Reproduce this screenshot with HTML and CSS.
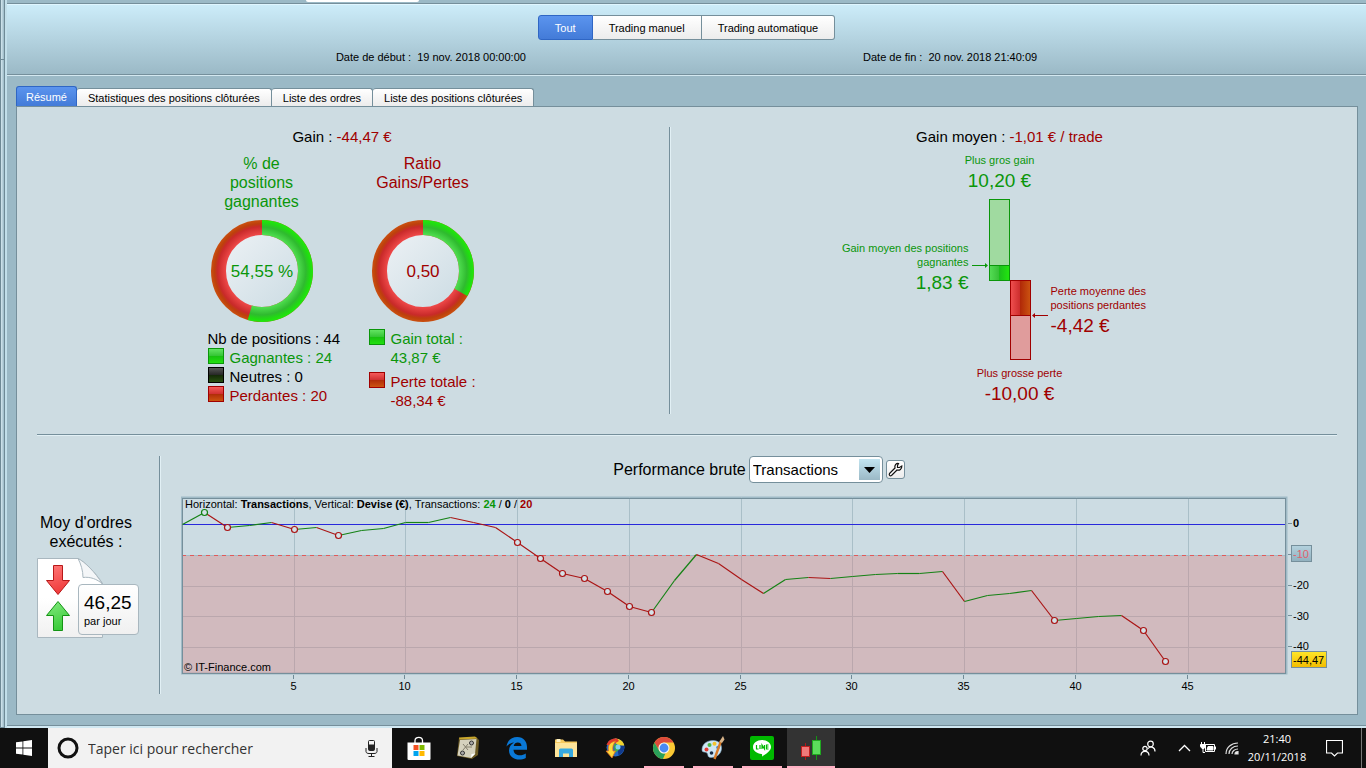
FILE: index.html
```html
<!DOCTYPE html>
<html lang="fr">
<head>
    <meta charset="UTF-8">
    <meta name="viewport" content="width=device-width, initial-scale=1.0">
    <title>Rapport détaillé</title>
    <link rel="stylesheet" href="styles.css">
</head>
<body>

    <div class="window">
        <div class="rail"><span></span><span></span></div>

        <div class="report">
            <div class="top-strip"><span class="strip-tab"></span></div>

            <header class="report-header">
                <div class="filter">
                    <button class="selected">Tout</button>
                    <button>Trading manuel</button>
                    <button>Trading automatique</button>
                </div>
                <div class="dates">
                    <span>Date de début :&nbsp; 19 nov. 2018 00:00:00</span>
                    <span>Date de fin :&nbsp; 20 nov. 2018 21:40:09</span>
                </div>
            </header>

            <div class="tabs" role="tablist">
                <button role="tab" class="selected" aria-selected="true">Résumé</button>
                <button role="tab">Statistiques des positions clôturées</button>
                <button role="tab">Liste des ordres</button>
                <button role="tab">Liste des positions clôturées</button>
            </div>

            <main class="panel">
                <div class="summary">
                    <section class="gain">
                        <div class="headline">Gain : <span class="loss">-44,47 €</span></div>
                        <div class="rings">
                            <div class="ring-col">
                                <div class="ring-title win">% de<br>positions<br>gagnantes</div>
                                <svg class="ring" width="108" height="102" viewBox="-54 -51 108 102">
                                    <defs>
                                        <radialGradient id="ringGreen" gradientUnits="userSpaceOnUse" cx="0" cy="0" r="51">
                                            <stop offset="0.7" stop-color="#52e052"/>
                                            <stop offset="0.86" stop-color="#2fba2f"/>
                                            <stop offset="0.95" stop-color="#20dd10"/>
                                            <stop offset="1" stop-color="#22e80e"/>
                                        </radialGradient>
                                        <radialGradient id="ringRed" gradientUnits="userSpaceOnUse" cx="0" cy="0" r="51">
                                            <stop offset="0.7" stop-color="#f04a4a"/>
                                            <stop offset="0.87" stop-color="#c92a2a"/>
                                            <stop offset="0.93" stop-color="#bd400c"/>
                                            <stop offset="1" stop-color="#ca5010"/>
                                        </radialGradient>
                                        <linearGradient id="ringCore" x1="0" y1="0" x2="1" y2="1">
                                            <stop offset="0.1" stop-color="#e9eff3"/>
                                            <stop offset="0.9" stop-color="#cfdee5"/>
                                        </linearGradient>
                                    </defs>
                                    <circle r="37" fill="url(#ringCore)"/>
                                    <circle r="43.5" fill="none" stroke="url(#ringRed)" stroke-width="15"/>
                                    <circle r="43.5" fill="none" stroke="url(#ringGreen)" stroke-width="15" pathLength="100" stroke-dasharray="54.55 100" transform="rotate(-90)"/>
                                    <text class="ring-value win" x="0" y="6">54,55 %</text>
                                </svg>
                                <div class="legend">
                                    <div>Nb de positions : 44</div>
                                    <div class="key win"><i class="swatch green"></i>Gagnantes : 24</div>
                                    <div class="key"><i class="swatch black"></i>Neutres : 0</div>
                                    <div class="key loss"><i class="swatch red"></i>Perdantes : 20</div>
                                </div>
                            </div>
                            <div class="ring-col">
                                <div class="ring-title loss">Ratio<br>Gains/Pertes</div>
                                <svg class="ring" width="108" height="102" viewBox="-54 -51 108 102">
                                    <circle r="37" fill="url(#ringCore)"/>
                                    <circle r="43.5" fill="none" stroke="url(#ringRed)" stroke-width="15"/>
                                    <circle r="43.5" fill="none" stroke="url(#ringGreen)" stroke-width="15" pathLength="100" stroke-dasharray="33.2 100" transform="rotate(-90)"/>
                                    <text class="ring-value loss" x="0" y="6">0,50</text>
                                </svg>
                                <div class="legend spaced">
                                    <div class="key win"><i class="swatch green"></i><span>Gain total :<br>43,87 €</span></div>
                                    <div class="key loss"><i class="swatch red"></i><span>Perte totale :<br>-88,34 €</span></div>
                                </div>
                            </div>
                        </div>
                    </section>

                    <section class="average">
                        <div class="headline">Gain moyen : <span class="loss">-1,01 € / trade</span></div>
                        <div class="extreme best win">Plus gros gain<b>10,20 €</b></div>
                        <div class="bars">
                            <div class="bar-label left win">Gain moyen des positions<br>gagnantes<b>1,83 €</b></div>
                            <svg width="76" height="162" viewBox="0 0 76 162">
                                <defs>
                                    <linearGradient id="barGreen">
                                        <stop offset="0" stop-color="#55dd55"/>
                                        <stop offset="0.5" stop-color="#35be35"/>
                                        <stop offset="0.5" stop-color="#1cc01c"/>
                                        <stop offset="1" stop-color="#22e80e"/>
                                    </linearGradient>
                                    <linearGradient id="barRed">
                                        <stop offset="0" stop-color="#f05050"/>
                                        <stop offset="0.48" stop-color="#cc2c2c"/>
                                        <stop offset="0.48" stop-color="#b02808"/>
                                        <stop offset="1" stop-color="#cc5410"/>
                                    </linearGradient>
                                </defs>
                                <rect x="17.500" y="0.500" width="20" height="66" fill="#a0daa0" stroke="#0a960a"/>
                                <rect x="17.500" y="66.500" width="20" height="15" fill="url(#barGreen)" stroke="#0a960a"/>
                                <rect x="38.500" y="81.500" width="20" height="35" fill="url(#barRed)" stroke="#a00000"/>
                                <rect x="38.500" y="116.500" width="20" height="44" fill="#e09c9c" stroke="#a00000"/>
                                <path d="M0 66.500H14" stroke="#0a960a"/>
                                <path d="M13 64v5l3-2.500z" fill="#0a960a"/>
                                <path d="M62 116.500H76" stroke="#a00000"/>
                                <path d="M63 114v5l-3-2.500z" fill="#a00000"/>
                            </svg>
                            <div class="bar-label right loss">Perte moyenne des<br>positions perdantes<b>-4,42 €</b></div>
                        </div>
                        <div class="extreme worst loss">Plus grosse perte<b>-10,00 €</b></div>
                    </section>
                </div>

                <div class="performance">
                    <section class="orders">
                        <div class="orders-title">Moy d'ordres<br>exécutés :</div>
                        <div class="orders-card">
                            <svg width="67" height="80" viewBox="0 0 67 80">
                                <defs>
                                    <linearGradient id="sheet" x2="0" y2="1">
                                        <stop offset="0.5" stop-color="#fff"/>
                                        <stop offset="1" stop-color="#f0f0f0"/>
                                    </linearGradient>
                                    <linearGradient id="down" x2="0.3" y2="1">
                                        <stop offset="0" stop-color="#ff7a7a"/>
                                        <stop offset="1" stop-color="#f03c3c"/>
                                    </linearGradient>
                                    <linearGradient id="up" x2="0.3" y2="1">
                                        <stop offset="0" stop-color="#84ea80"/>
                                        <stop offset="1" stop-color="#3ccc3c"/>
                                    </linearGradient>
                                </defs>
                                <path d="M.5.5H41C48 4 58 14 65.500 25.500V79.500H.5z" fill="url(#sheet)" stroke="#a9b7bf"/>
                                <path d="M41 .5C44 6 46 13 46 19.500C53 18.500 60 21 65.500 26C58 14 48 4 41 .5z" fill="#f4f6f8" stroke="#a9b7bf"/>
                                <path d="M16.500 7.500h9v15h7L21 36.500 9.500 22.500h7z" fill="url(#down)" stroke="#b81818"/>
                                <path d="M16.500 72.500h9v-15h7L21 43.500 9.500 57.500h7z" fill="url(#up)" stroke="#149414"/>
                            </svg>
                            <div class="orders-badge"><b>46,25</b>par jour</div>
                        </div>
                    </section>

                    <section class="graph">
                        <div class="graph-bar">
                            <label for="curve">Performance brute</label>
                            <span class="picker">
                                <select id="curve">
                                    <option>Transactions</option>
                                    <option>Temps</option>
                                </select>
                                <span class="picker-arrow"><svg width="11" height="6" viewBox="0 0 11 6"><path d="M0 0h11L5.500 6z"/></svg></span>
                            </span>
                            <button class="tool" aria-label="Réglages">
                                <svg width="15" height="15" viewBox="0 0 15 15"><path d="M1.500 11.500L7 6C6.300 3.500 8 1.200 10.500 1.500L9.500 3.500V5.500H11.500L13.800 4C14 7 11.500 8.800 9 8L3.500 13.500C2 14.300.700 13 1.500 11.500z" fill="#fff" stroke="#111" stroke-width="1.200"/></svg>
                            </button>
                        </div>
                        <svg class="chart" id="chart"></svg>
                    </section>
                </div>
            </main>
        </div>
    </div>

    <footer class="taskbar">
        <button class="start" aria-label="Démarrer">
            <svg width="16" height="16" viewBox="0 0 16 16" fill="#fff"><path d="M0 2.300L6.500 1.400V7.600H0zM7.300 1.300L16 0V7.600H7.300zM0 8.400H6.500V14.600L0 13.700zM7.300 8.400H16V16L7.300 14.700z"/></svg>
        </button>
        <label class="search">
            <svg width="22" height="22" viewBox="0 0 22 22"><circle cx="11" cy="11" r="9" fill="none" stroke="#111" stroke-width="3"/></svg>
            <input type="text" placeholder="Taper ici pour rechercher" aria-label="Taper ici pour rechercher">
            <svg width="13" height="17" viewBox="0 0 13 17" fill="none" stroke="#222"><rect x="3.500" y=".5" width="6" height="10" rx="1"/><path d="M4 5h5v5H4z" fill="#222"/><path d="M1 8v3.500C1 13 2.500 13.500 4 13.500h5c1.500 0 3-.5 3-2V8M6.500 13.500v3M3.500 16.500h6"/></svg>
        </label>

        <nav class="apps">
            <button aria-label="Microsoft Store">
                <svg width="24" height="24" viewBox="0 0 24 24"><path d="M8 7V4.500C8 .3 15.500.3 15.500 4.500V7" fill="none" stroke="#fff" stroke-width="1.300"/><path d="M.5 6.500h23V23a1 1 0 0 1-1 1h-21a1 1 0 0 1-1-1z" fill="#fff"/><path d="M6.500 9h5v5h-5z" fill="#f25022"/><path d="M12.500 9h5v5h-5z" fill="#7fba00"/><path d="M6.500 15h5v5h-5z" fill="#00a4ef"/><path d="M12.500 15h5v5h-5z" fill="#ffb900"/></svg>
            </button>
            <button aria-label="Carte">
                <svg width="24" height="24" viewBox="0 0 24 24"><path d="M3 2L20 1l3 3-1 15-6 4L1 20z" fill="#6b5a25"/><path d="M3 1.500l16-1 2.500 2-18 1z" fill="#c9a72c"/><path d="M4 4l16.500-1-1.500 15-4 4L1.500 19.500z" fill="#d5d1bd"/><path d="M7 8l5 6M12 8l-5 6M9 11h7" fill="none" stroke="#85806e"/><circle cx="15.500" cy="7" r="2" fill="#aaa" stroke="#333"/><circle cx="6.500" cy="17" r="2" fill="#aaa" stroke="#333"/><path d="M15 22l.5-4 4-.5z" fill="#fff"/></svg>
            </button>
            <button aria-label="Edge">
                <svg width="24" height="24" viewBox="0 0 24 24"><path d="M1.500 10.500C2.500 4 7 1 12.300 1C18.500 1 22 5.500 22 11v2.700H8.500C8.800 20 16.500 20.500 20.800 17.500V22C14 25.500 4 23 4 14.500C4 11 6 8 9 6.500C5.500 7 3 8.500 1.500 10.500zM8.700 10h7.800C16.500 5.500 9.500 5.300 8.700 10z" fill="#0a78d6"/></svg>
            </button>
            <button aria-label="Explorateur de fichiers">
                <svg width="24" height="24" viewBox="0 0 24 24"><path d="M1 3.500h8l2 2H23V21H1z" fill="#f5c95e"/><path d="M2.500 3h4v3h-4z" fill="#fff3c4"/><path d="M1 7h22v14H1z" fill="#fde49a"/><path d="M5 21v-7a1.500 1.500 0 0 1 1.500-1.500h11A1.500 1.500 0 0 1 19 14v7h-4v-3.500H9V21z" fill="#35a9e1"/></svg>
            </button>
            <button aria-label="Navigateur">
                <svg width="24" height="24" viewBox="0 0 24 24"><circle cx="12.500" cy="11.500" r="9" fill="#2468c4"/><path d="M12 2.500c5 0 8.500 3 9.300 7L16 10 11 6z" fill="#f2d32c"/><path d="M3.500 9C5 4 9 2 14 2.500L16 5 9 9z" fill="#e33a2c"/><path d="M14 9l7.500 1c0 5-3 8-6 9.500z" fill="#123a8c"/><path d="M11 8l5 1 1 4-5 4z" fill="#3fae4a"/><path d="M13 5C7 6 4.500 9 5.500 15H3l6 7 3.500-7H10C9.500 11 10 8 13 5z" fill="#ffd93b" stroke="#e06a20" stroke-width=".8"/><circle cx="15" cy="11" r="2.500" fill="#7fd0f2"/></svg>
            </button>
            <button class="running" aria-label="Chrome">
                <svg width="24" height="24" viewBox="0 0 24 24"><circle cx="12" cy="12" r="11" fill="#fbc934"/><path d="M12 1a11 11 0 0 1 9.500 5.500H12A5.500 5.500 0 0 0 7.200 14.800L2.500 6.500A11 11 0 0 1 12 1z" fill="#de4b3c"/><path d="M2.500 6.500L7.200 14.800A5.500 5.500 0 0 0 13.500 17.300L10.900 23A11 11 0 0 1 2.500 6.500z" fill="#2aa15b"/><circle cx="12" cy="12" r="5.500" fill="#f3f3f3"/><circle cx="12" cy="12" r="4.400" fill="#4a8af4"/></svg>
            </button>
            <button class="running" aria-label="Paint">
                <svg width="24" height="24" viewBox="0 0 24 24"><path d="M1 14C1 8 6 4.500 12 4.500c6 0 9 4 8.500 8.500-.5 5-5 8.500-10.500 8.500-4 0-2.500-3-4-4.500S1 17 1 14z" fill="#cfe6f4" stroke="#7fa8c4" stroke-width=".6"/><circle cx="5.500" cy="13.500" r="2" fill="#e33b32"/><circle cx="8.500" cy="9" r="2" fill="#4cb648"/><circle cx="13.500" cy="7.800" r="2" fill="#f5c32c"/><circle cx="17" cy="11.500" r="1.800" fill="#3a86d8"/><circle cx="10.500" cy="17" r="1.800" fill="#182c45"/><path d="M20 5L13.500 23" stroke="#d97b27" stroke-width="2.400"/><path d="M18.500 5.500L22 0l1.500 3.500L21 7z" fill="#d8b48a"/></svg>
            </button>
            <button class="running" aria-label="LINE">
                <svg width="24" height="24" viewBox="0 0 24 24"><rect width="24" height="24" rx="2" fill="#00b900"/><path d="M12 4c5 0 9 3 9 7 0 4-5 7-9 9.500.3-1.500.3-2.500-.5-2.500C7 17.500 3 15 3 11s4-7 9-7z" fill="#fff"/><path d="M6.500 9v4h2M10 9v4M12 13V9l2.500 4V9M18.500 9h-2v4h2M16.500 11h2" fill="none" stroke="#00b900" stroke-width="1.200"/></svg>
            </button>
            <button class="running active" aria-label="Trading">
                <svg width="24" height="24" viewBox="0 0 24 24"><path d="M6.500 7v17" stroke="#b01818"/><rect x="2.500" y="10.500" width="8" height="10" fill="#f07a7a" stroke="#c02020"/><path d="M17.500 0v24" stroke="#149414"/><rect x="13.500" y="4.500" width="8" height="14" fill="#5cdc5c" stroke="#20a820"/></svg>
            </button>
        </nav>

        <div class="tray">
            <button class="people" aria-label="Contacts">
                <svg width="16" height="16" viewBox="0 0 16 16" fill="none" stroke="#fff" stroke-width="1.200"><circle cx="10.500" cy="4" r="2.800"/><circle cx="5" cy="8.500" r="2.200"/><path d="M1 15.500c0-5.500 8-5.500 8 0M8 8.500c3-3 7-1 7 3"/></svg>
            </button>
            <button aria-label="Icônes cachées">
                <svg width="13" height="8" viewBox="0 0 13 8"><path d="M1 7l5.500-5.500L12 7" fill="none" stroke="#fff" stroke-width="1.300"/></svg>
            </button>
            <button aria-label="Batterie">
                <svg width="17" height="12" viewBox="0 0 17 12" fill="none" stroke="#fff"><path d="M5.500 2.500h9v7h-9z"/><path d="M8 4.500h5v3.500H7z" fill="#fff"/><path d="M15.500 4.500v3M1.500 0v2.500M4.500 0v2.500M3 6v4.500h2"/><path d="M.5 2.500h5v2l-1.500 2H2L.5 4.500z" fill="#fff"/></svg>
            </button>
            <button aria-label="Wi-Fi">
                <svg width="14" height="14" viewBox="0 0 14 14" fill="none" stroke="#ddd" stroke-width="1.200"><path d="M1 13C1 6.500 6.500 2 13 2M4 13C4 8.500 8 5 13 5M7 13C7 10.500 9.500 8 13 8"/><path d="M10 13c0-1.500 1.500-2.500 3-2.500V13z" fill="#fff"/></svg>
            </button>
            <div class="clock">21:40<br>20/11/2018</div>
            <button class="notif" aria-label="Notifications">
                <svg width="17" height="17" viewBox="0 0 17 17"><path d="M.5.500h16v12.500h-5L8.500 16 5.500 13h-5z" fill="none" stroke="#fff" stroke-width="1.200"/></svg>
            </button>
            <span class="desktop-peek"></span>
        </div>
    </footer>

    <script src="chart.js"></script>
</body>
</html>
```
FILE: chart.js
```js
document.addEventListener('DOMContentLoaded', () => {

    // Cumulated gain after each transaction, in euros
    const gains = [
        0, 3.9, -1, -0.2, 0.6, -1.6, -1, -3.6, -2.1, -1.3,
        0.6, 0.6, 2.3, 0.6, -1, -5.8, -11, -15.9, -17.5, -21.8,
        -26.6, -28.6, -18.2, -9.7, -12.8, -18, -22.4, -17.9, -17.2, -17.5,
        -16.9, -16.2, -15.9, -15.9, -15.3, -25, -23.1, -22.4, -21.4, -31.2,
        -30.5, -29.9, -29.5, -34.4, -44.47
    ];
    // New highs and new lows get a dot
    const dots = [1, 2, 5, 7, 15, 16, 17, 18, 19, 20, 21, 39, 43, 44];

    const chart = document.getElementById('chart');
    const top = 1;
    const bottom = 177;
    const zero = 28;
    const span = 49.4;

    function draw() {
        const width = chart.clientWidth;
        const right = width - 50;
        const px = n => Math.round(1 + n * (right - 2) / span) + 0.5;
        const py = v => Math.round(zero - v * 3.08) + 0.5;
        const limit = py(-10);

        let out = `
            <defs>
                <linearGradient id="tagBlue" x2="0" y2="1"><stop offset="0" stop-color="#b4d2de"/><stop offset="1" stop-color="#90b0be"/></linearGradient>
                <linearGradient id="tagGold" x2="0" y2="1"><stop offset="0" stop-color="#ffe628"/><stop offset="1" stop-color="#f2bc00"/></linearGradient>
            </defs>
            <rect x="0.5" y="${top + 0.5}" width="${right - 1}" height="${bottom - top}" fill="#ccdce3" stroke="#9fbac6" stroke-width="2"/>`;

        for (let n = 5; n <= 45; n += 5) {
            out += `<path d="M${px(n)} ${top}V${bottom}" stroke="#a9bfc8"/>
                <path d="M${px(n) - 1} ${bottom + 2}v4" stroke="#6f8a96"/>
                <text x="${px(n) - 1}" y="194" text-anchor="middle">${n}</text>`;
        }
        for (const v of [-20, -30, -40]) {
            out += `<path d="M1 ${py(v)}H${right - 1}" stroke="#a9bfc8"/>`;
        }

        // Loss zone
        out += `<rect x="1" y="${limit}" width="${right - 2}" height="${bottom - limit}" fill="#d88080" fill-opacity="0.37"/>
            <path d="M1 ${limit}H${right - 1}" stroke="#a4bcc6"/>
            <path d="M1 ${limit}H${right - 1}" stroke="#e05a5a" stroke-dasharray="4 4"/>
            <path d="M1 ${py(0)}H${right - 1}" stroke="#2828dc"/>
            <rect x="1.5" y="${top + 1.5}" width="${right - 3}" height="${bottom - top - 1}" fill="none" stroke="#758f9b"/>`;

        for (let n = 1; n < gains.length; n++) {
            const kind = gains[n] >= gains[n - 1] ? 'up' : 'down';
            out += `<path class="${kind}" d="M${px(n - 1)} ${py(gains[n - 1])}L${px(n)} ${py(gains[n])}"/>`;
        }
        for (const n of dots) {
            const kind = gains[n] >= gains[n - 1] ? 'up' : 'down';
            out += `<circle class="${kind}" cx="${px(n)}" cy="${py(gains[n])}" r="3"/>`;
        }

        // Scale on the right
        for (const v of [0, -10, -20, -30, -40]) {
            out += `<path d="M${right + 1} ${py(v) - 1}h4" stroke="#758f9b"/>`;
        }
        out += `<text class="zero" x="${right + 6}" y="31">0</text>
            <rect x="${right + 4.5}" y="49.5" width="20" height="16" fill="url(#tagBlue)" stroke="#758f9b"/>
            <text x="${right + 6}" y="62" class="limit">-10</text>
            <text x="${right + 6}" y="93">-20</text>
            <text x="${right + 6}" y="124">-30</text>
            <text x="${right + 6}" y="154">-40</text>
            <rect x="${right + 4.5}" y="155.5" width="35" height="16" fill="url(#tagGold)" stroke="#758f9b"/>
            <text x="${right + 6}" y="168">-44,47</text>
            <text x="4" y="12">Horizontal: <tspan class="strong">Transactions</tspan>, Vertical: <tspan class="strong">Devise (€)</tspan>, Transactions: <tspan class="strong win">24</tspan> / <tspan class="strong">0</tspan> / <tspan class="strong loss">20</tspan></text>
            <text x="3" y="175">© IT-Finance.com</text>`;

        chart.innerHTML = out;
    }

    draw();
    window.addEventListener('resize', draw);
});
```
FILE: styles.css
```css
* {
    box-sizing: border-box;
}
body {
    margin: 0;
    min-height: 100vh;
    display: flex;
    flex-direction: column;
    font-family: "Liberation Sans", Arial, sans-serif;
    font-size: 11px;
    color: #000;
    background-color: #9bb9c6;
}
button {
    font: inherit;
    color: inherit;
    padding: 0;
    border: none;
    background: none;
}
b {
    font-weight: normal;
}
svg {
    display: block;
}
.win {
    color: #0a960a;
    fill: #0a960a;
}
.loss {
    color: #a00000;
    fill: #a00000;
}

/* Window frame */
.window {
    flex: 1;
    display: flex;
}
.rail {
    width: 7px;
    display: flex;
    flex-direction: column;
    border-right: 2px solid #c2dfea;
    border-left: 1px solid #6f8a96;
}
.rail span {
    height: 366px;
    border-right: 1px solid #6f8a96;
    border-bottom: 1px solid #6f8a96;
    background: linear-gradient(to right, #d4e8f0, #9bb9c6);
}
.rail span:first-child {
    height: 60px;
}
.rail span:last-child {
    flex: 1;
}
.report {
    flex: 1;
    min-width: 0;
    display: flex;
    flex-direction: column;
    border-bottom: 2px solid #d0e8f2;
    box-shadow: inset 0 -1px #758f9b;
}
.top-strip {
    height: 4px;
    padding-left: 299px;
    border-bottom: 1px solid #758f9b;
}
.strip-tab {
    display: block;
    width: 113px;
    height: 2px;
    background-color: #fff;
    border-radius: 0 0 3px 3px;
}
.report-header {
    padding-top: 10px;
    height: 71px;
    border-top: 1px solid #e0f6ff;
    border-bottom: 1px solid #758f9b;
    box-shadow: 0 1px #d4e8f0;
    background: linear-gradient(#ccecf9, #9bb9c6);
}
.filter {
    display: flex;
    justify-content: center;
}
.filter button {
    height: 25px;
    padding: 0 16px;
    border: 1px solid #758f9b;
    border-left: none;
    background: linear-gradient(#fff, #ececec);
}
.filter button:first-child {
    border-radius: 3px 0 0 3px;
}
.filter button:last-child {
    border-radius: 0 3px 3px 0;
}
.filter .selected,
.tabs .selected {
    color: #fff;
    border: 1px solid #2f66c4;
    background: linear-gradient(#5b94ee, #437bd8);
}
.dates {
    width: 77%;
    margin: 10px auto 0;
    padding-left: 8px;
    display: grid;
    grid-template-columns: 1fr 1fr;
    text-align: center;
    line-height: 14px;
}

/* Tabs */
.tabs {
    margin: 11px 9px 0;
    display: flex;
    align-items: flex-end;
}
.tabs button {
    height: 18px;
    padding: 0 11px;
    border: 1px solid #758f9b;
    border-left: none;
    border-bottom: none;
    border-radius: 3px 3px 0 0;
    background: linear-gradient(#fff, #ececec);
}
.tabs .selected {
    height: 20px;
    padding: 0 9px;
    border: 1px solid #2f66c4;
    border-bottom: none;
    background: linear-gradient(#5b94ee, #437bd8);
}
.panel {
    flex: 1;
    margin: 0 8px 11px 9px;
    padding: 20px;
    border: 1px solid #758f9b;
    background-color: #cddce2;
}

/* Gain summary */
.summary {
    display: grid;
    grid-template-columns: 633fr 667fr;
    padding-bottom: 20px;
    border-bottom: 1px solid #758f9b;
    box-shadow: 0 1px #e2f0f5;
    font-size: 15px;
    line-height: 19px;
    text-align: center;
}
.headline {
    white-space: nowrap;
}
.gain {
    min-height: 287px;
    padding-right: 22px;
    border-right: 1px solid #758f9b;
    box-shadow: 1px 0 #e2f0f5;
}
.rings {
    margin-top: 8px;
    display: flex;
    justify-content: center;
    gap: 53px;
}
.ring-col {
    width: 108px;
}
.ring-title {
    height: 57px;
    margin-bottom: 9px;
    font-size: 16px;
}
.ring-value {
    font-size: 17px;
    text-anchor: middle;
}
.legend {
    margin-top: 7px;
    text-align: left;
    white-space: nowrap;
}
.legend.spaced {
    display: grid;
    gap: 5px;
}
.key {
    display: flex;
    gap: 6px;
}
.swatch {
    flex: none;
    width: 16px;
    height: 16px;
    border: 1px solid;
}
.swatch.green {
    border-color: #0a960a;
    background: linear-gradient(#62e462, #34c434 50%, #18c010 50%, #22e010);
}
.swatch.black {
    border-color: #000;
    background: linear-gradient(#555, #262626 50%, #142808 50%, #285010);
}
.swatch.red {
    border-color: #a00000;
    background: linear-gradient(#f45a5a, #d03030 50%, #b02c08 50%, #cc5410);
}

/* Average gain */
.average {
    padding-left: 12px;
}
.extreme,
.bar-label {
    font-size: 11px;
    line-height: 14px;
}
.extreme b,
.bar-label b {
    display: block;
    margin-top: 3px;
    font-size: 19px;
    line-height: 22px;
}
.best {
    margin: 7px 20px 7px 0;
}
.worst {
    margin: 5px 0 0 20px;
}
.bars {
    display: grid;
    grid-template-columns: 1fr 76px 1fr;
    column-gap: 3px;
}
.bar-label.left {
    padding-top: 42px;
    text-align: right;
}
.bar-label.right {
    padding-top: 85px;
    text-align: left;
}

/* Orders and performance curve */
.performance {
    display: flex;
    padding-top: 21px;
}
.orders {
    display: flex;
    flex-direction: column;
    justify-content: center;
    width: 123px;
    border-right: 1px solid #758f9b;
    box-shadow: 1px 0 #e2f0f5;
}
.orders-title {
    margin: 0 24px 7px 0;
    font-size: 16px;
    line-height: 19px;
    text-align: center;
}
.orders-card {
    position: relative;
}
.orders-badge {
    position: absolute;
    left: 41px;
    top: 26px;
    width: 61px;
    padding: 7px 5px 6px;
    border: 1px solid #a9b7bf;
    border-radius: 4px;
    background: linear-gradient(#fff, #f0f0f0);
    line-height: 14px;
}
.orders-badge b {
    display: block;
    font-size: 19px;
    line-height: 22px;
}
.graph {
    flex: 1;
    min-width: 0;
    margin-left: 21px;
}
.graph-bar {
    display: flex;
    justify-content: center;
    align-items: center;
    gap: 3px;
    font-size: 16px;
}
.picker {
    position: relative;
}
.picker select {
    display: block;
    width: 134px;
    height: 27px;
    padding: 0 3px;
    appearance: none;
    border: 1px solid #758f9b;
    border-radius: 4px;
    background-color: #fff;
    color: #000;
    font-family: inherit;
    font-size: 15px;
}
.picker-arrow {
    position: absolute;
    right: 3px;
    top: 3px;
    width: 21px;
    height: 21px;
    display: flex;
    align-items: center;
    justify-content: center;
    background: linear-gradient(#c2e4f0, #9bb9c6);
    pointer-events: none;
}
.tool {
    width: 19px;
    height: 19px;
    display: flex;
    align-items: center;
    justify-content: center;
    border: 1px solid #758f9b;
    border-radius: 3px;
    background: linear-gradient(#fff, #ececec);
}
.chart {
    width: 100%;
    height: 198px;
    margin-top: 13px;
    font-size: 11px;
}
.chart .up,
.chart .down {
    fill: #d4e2e8;
    stroke: #148214;
    stroke-width: 1.2;
}
.chart .down {
    stroke: #aa1414;
}
.chart .zero,
.chart .strong {
    font-weight: bold;
}
.chart .limit {
    fill: #e0606c;
}

/* Windows taskbar */
.taskbar {
    height: 40px;
    display: flex;
    background-color: #101010;
    color: #fff;
    font-family: "Open Sans", "Noto Sans", sans-serif;
}
.taskbar button {
    display: flex;
    align-items: center;
    justify-content: center;
}
.start {
    width: 48px;
}
.search {
    width: 344px;
    padding: 0 14px 0 9px;
    display: flex;
    align-items: center;
    gap: 9px;
    background-color: #f2f2f2;
}
.search input {
    flex: 1;
    min-width: 0;
    padding: 0;
    border: none;
    outline: none;
    background: none;
    font-family: inherit;
    font-size: 14px;
}
.search input::placeholder {
    color: #333;
    opacity: 1;
}
.apps {
    display: flex;
    gap: 1px;
    margin-left: 3px;
}
.apps button {
    width: 48px;
}
.apps .running {
    background: linear-gradient(#ffb0c4, #ffb0c4) bottom / 40px 2px no-repeat;
}
.apps .active {
    background-color: #333;
    background-size: 48px 2px;
}
.tray {
    margin-left: auto;
    display: flex;
    align-items: stretch;
}
.tray button {
    width: 24px;
}
.tray .people {
    margin-right: 12px;
}
.clock {
    width: 66px;
    padding-top: 2px;
    font-size: 11px;
    line-height: 18px;
    text-align: center;
}
.tray .notif {
    width: 48px;
}
.desktop-peek {
    width: 5px;
    margin-left: 3px;
    border-left: 1px solid #777;
}
```
